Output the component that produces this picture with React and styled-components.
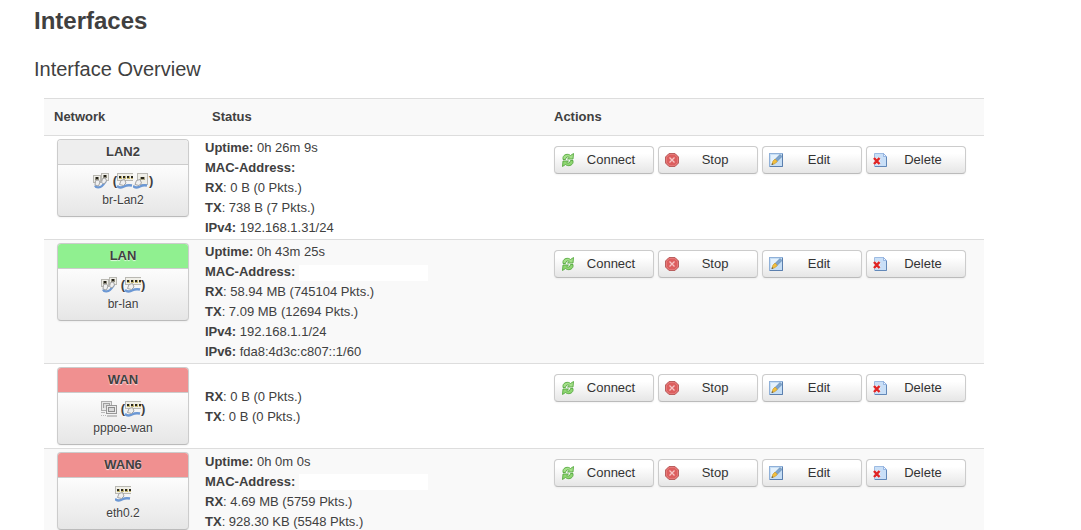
import React from 'react';

import styled, { createGlobalStyle } from 'styled-components';



/////

const GlobalStyle = createGlobalStyle`
    body{
        margin: 0;
        background-color: #fff;
        color: #404040;
        font-family: "Liberation Sans", Arial, sans-serif;
        font-size: 13px;
        line-height: 20px;
    }
`

const PageWrapper = styled.main`
    padding: 3px 34px 0px;
`

const PageTitle = styled.h2`
    margin: 0;
    font-size: 24px;
    line-height: 36px;
    font-weight: bold;
`

const SectionTitle = styled.h3`
    margin: 12px 0px 11px;
    font-size: 20px;
    line-height: 36px;
    font-weight: normal;
`

const TableWrapper = styled.div`
    max-width: 940px;
    margin-left: 10px;
`

const InterfaceTable = styled.table`
    width: 100%;
    border-collapse: separate;
    border-spacing: 0;
    table-layout: fixed;
    th{
        padding: 8px 10px;
        border-top: 1px solid #ddd;
        background-color: #f9f9f9;
        text-align: left;
        font-weight: bold;
    }
    .col-network{
        width: 158px;
        box-sizing: border-box;
    }
    .col-actions{
        width: 440px;
        box-sizing: border-box;
    }
    tbody tr:nth-child(even){
        background-color: #f9f9f9;
    }
`

const NetworkCell = styled.td`
    padding: 3px 13px;
    border-top: 1px solid #ddd;
    vertical-align: top;
`

const StatusCell = styled.td`
    padding: 2px 3px 1px;
    border-top: 1px solid #ddd;
    vertical-align: middle;
`

const ActionCell = styled.td`
    padding: 10px 10px 3px;
    border-top: 1px solid #ddd;
    vertical-align: top;
`

const StatusLine = styled.div`
    white-space: nowrap;
`

const HiddenValue = styled.span`
    display: inline-block;
    width: 129px;
    height: 16px;
    background-color: #fff;
    vertical-align: middle;
`

const IfaceBox = styled.div`
    border: 1px solid #ccc;
    border-bottom-color: #bbb;
    border-radius: 4px;
    overflow: hidden;
    text-align: center;
    background-image: linear-gradient(#fff, #fff 25%, #e6e6e6);
    box-shadow: 0 1px 2px rgba(0, 0, 0, 0.05);
    text-shadow: 0 1px 1px rgba(255, 255, 255, 0.75);
`

const IfaceHead = styled.div`
    height: 24px;
    line-height: 24px;
    border-bottom: 1px solid #ccc;
    background-color: ${props => props.$color};
    font-weight: bold;
`

const IfaceBody = styled.div`
    padding: 6px 0px 7px;
    font-size: 12px;
    line-height: 18px;
`

const IconLine = styled.div`
    display: flex;
    justify-content: center;
    align-items: center;
    height: 20px;
    font-size: 13px;
    font-weight: bold;
    .icon-group{
        display: flex;
        align-items: center;
        margin-left: 4px;
    }
`

const ButtonGroup = styled.div`
    display: flex;
    gap: 4px;
`

const ActionButton = styled.button`
    display: flex;
    align-items: center;
    width: 100px;
    height: 28px;
    padding: 0px 7px 0px 5px;
    border: 1px solid #ccc;
    border-bottom-color: #bbb;
    border-radius: 4px;
    background-image: linear-gradient(#fff, #fff 25%, #e6e6e6);
    box-shadow: 0 1px 2px rgba(0, 0, 0, 0.05);
    color: #333;
    font-family: inherit;
    font-size: 13px;
    line-height: 20px;
    cursor: pointer;
    span{
        flex: 1;
        text-align: center;
    }
    &:hover{
        background-image: linear-gradient(#e6e6e6, #e6e6e6);
    }
`



///////////// icons

const Svg = ({ children }) => (
    <svg width="16" height="16" viewBox="0 0 16 16" aria-hidden="true">{children}</svg>
);

const BridgeIcon = () => (
    <Svg>
        <path d="M2 12.500c1 2.500 5 2.500 7 .5s2.500-3 4-5" fill="none" stroke="#6c98d4" strokeWidth="2.200" />
        <rect x="0.500" y="2.500" width="7" height="7" fill="#efeee8" stroke="#b9b8b2" />
        <rect x="8.500" y="0.500" width="7" height="7" fill="#efeee8" stroke="#b9b8b2" />
        <path d="M2 4h4v3H2zM10 2h4v3h-4z" fill="#8b8878" />
        <path d="M3 4h2v2H3zM11 2h2v2h-2z" fill="#25231c" />
        <path d="M2.500 7.500l3-.5 1.500 2-1.500 4-3.500-1z" fill="#f0f0f0" stroke="#9b9b9b" strokeWidth="0.900" />
        <path d="M9.500 5.500l3-.5 1 3-2.500 3-2.500-1.500z" fill="#f0f0f0" stroke="#9b9b9b" strokeWidth="0.900" />
    </Svg>
);

const SwitchIcon = () => (
    <Svg>
        <rect x="0.500" y="0.500" width="16" height="7" fill="#f0efe8" stroke="#b9b8b2" />
        <path d="M2 3h3v3H2zM6 3h3v3H6zM10 3h3v3h-3zM14 3h2v3h-2z" fill="#c3b672" />
        <path d="M2 3h2v2H2zM6 3h2v2H6zM10 3h2v2h-2zM14 3h2v2h-2z" fill="#2a2820" />
        <path d="M0 13c3 2.500 5 1.800 7.500.3s4.500-1.300 7.500-.8" fill="none" stroke="#6c98d4" strokeWidth="2.400" />
        <path d="M4 7.500l3.500-1 1.500 3.500-2.500 2.500-4-1z" fill="#f0f0f0" stroke="#9b9b9b" strokeWidth="0.900" />
    </Svg>
);

const EthernetIcon = () => (
    <Svg>
        <rect x="4.500" y="0.500" width="10" height="11" fill="#efeee8" stroke="#b9b8b2" />
        <path d="M7 4h5v3H7z" fill="#aaa584" />
        <path d="M8 4h3v2H8z" fill="#2a2820" />
        <path d="M0 13c3 2.500 5 1.800 7.500.3s4-1.300 6.500-.8" fill="none" stroke="#6c98d4" strokeWidth="2.400" />
        <path d="M3.500 7.500l3.500-1 1.500 3.500-2.500 2.500-4-1z" fill="#f0f0f0" stroke="#9b9b9b" strokeWidth="0.900" />
    </Svg>
);

const TunnelIcon = () => (
    <Svg>
        <g shapeRendering="crispEdges">
            <path d="M0 0h11v10H0z" fill="#adadad" />
            <path d="M1 1h9v8H1z" fill="#e8e8e8" />
            <path d="M2 2h7v5H2z" fill="#a0a0a0" />
            <path d="M3 3h5v4H3z" fill="#dcdcdc" />
            <path d="M5 4h11v9H5z" fill="#989898" />
            <path d="M6 5h9v7H6z" fill="#ebebeb" />
            <path d="M7 6h7v5H7z" fill="#8c8c8c" />
            <path d="M8 7h5v3H8z" fill="#d8d8d8" />
            <path d="M6 14h10v2H6z" fill="#c4c4c4" />
            <path d="M0 14h1v1H0zM2 14h1v1H2zM4 14h1v1H4zM0 11h4v1H0z" fill="#b8b8b8" />
        </g>
    </Svg>
);

const ConnectIcon = () => (
    <Svg>
        <path d="M3 7.500V5.500C3.500 2.500 8 1.200 10.500 3.500L13.500 1.500 13 7H7.500l1.800-1.700C7.800 4.300 5.800 5 5.500 7.500z" fill="#a5e08a" stroke="#55a83e" strokeWidth="0.900" />
        <path d="M13 8.500v2c-.5 3-5 4.300-7.500 2L2.500 14.500 3 9h5.500l-1.800 1.700c1.500 1 3.500.3 3.800-2.200z" fill="#8fd672" stroke="#55a83e" strokeWidth="0.900" />
    </Svg>
);

const StopIcon = () => (
    <Svg>
        <path d="M5 1.500h6L14.500 5v6L11 14.500H5L1.500 11V5z" fill="#dc5f5f" stroke="#b9605f" />
        <path d="M5.400 2.500h5.200l2.900 2.900v5.200l-2.900 2.900H5.400l-2.900-2.900V5.400z" fill="none" stroke="#e98585" strokeWidth="0.700" />
        <path d="M5.500 5.500l5 5M10.500 5.500l-5 5" stroke="#f6c6c6" strokeWidth="1.300" />
    </Svg>
);

const EditIcon = () => (
    <Svg>
        <rect x="1.500" y="1.500" width="13" height="13" fill="#c6def5" stroke="#8fb0d8" />
        <path d="M2 14.500h12.500V2" fill="none" stroke="#5b7fae" />
        <path d="M3 3h9L3 12z" fill="#e4f1fc" />
        <path d="M6 8.500L12 2.500l2 2L8 10.500z" fill="#7ea4cc" stroke="#5980a8" strokeWidth="0.600" />
        <path d="M4 12.500L4.800 9.300 7 7 9.300 9.200 7.200 11.500z" fill="#f2bd3c" stroke="#c89a2a" strokeWidth="0.600" />
        <path d="M3.500 13l.6-2 1.400 1.400z" fill="#6b5a36" />
    </Svg>
);

const DeleteIcon = () => (
    <Svg>
        <path d="M2.500 1.500h9l3 3v10h-12z" fill="#c9dff7" stroke="#9dbbe2" />
        <path d="M3 14.500h11.500V5" fill="none" stroke="#6288b8" />
        <path d="M11.500 1.500v3h3z" fill="#f0f7ff" stroke="#7ba1d8" strokeWidth="0.700" />
        <path d="M2 6l5.500 6M7.500 6L2 12" stroke="#fff" strokeWidth="3.800" opacity="0.600" />
        <path d="M2 6l5.500 6M7.500 6L2 12" stroke="#e02525" strokeWidth="2.500" />
    </Svg>
);



/////////////

const deviceIcons = {
    bridge: BridgeIcon,
    switch: SwitchIcon,
    ethernet: EthernetIcon,
    tunnel: TunnelIcon,
};

const zoneColors = {
    none: '#eeeeee',
    lan: '#90f090',
    wan: '#f09090',
};

const interfaces = [
    {
        name: 'LAN2', zone: 'none', device: 'br-Lan2', type: 'bridge', ports: ['switch', 'ethernet'],
        status: [
            { label: 'Uptime:', value: '0h 26m 9s' },
            { label: 'MAC-Address:', hidden: true },
            { label: 'RX', value: '0 B (0 Pkts.)' },
            { label: 'TX', value: '738 B (7 Pkts.)' },
            { label: 'IPv4:', value: '192.168.1.31/24' },
        ],
    },
    {
        name: 'LAN', zone: 'lan', device: 'br-lan', type: 'bridge', ports: ['switch'],
        status: [
            { label: 'Uptime:', value: '0h 43m 25s' },
            { label: 'MAC-Address:', hidden: true },
            { label: 'RX', value: '58.94 MB (745104 Pkts.)' },
            { label: 'TX', value: '7.09 MB (12694 Pkts.)' },
            { label: 'IPv4:', value: '192.168.1.1/24' },
            { label: 'IPv6:', value: 'fda8:4d3c:c807::1/60' },
        ],
    },
    {
        name: 'WAN', zone: 'wan', device: 'pppoe-wan', type: 'tunnel', ports: ['switch'],
        status: [
            { label: 'RX', value: '0 B (0 Pkts.)' },
            { label: 'TX', value: '0 B (0 Pkts.)' },
        ],
    },
    {
        name: 'WAN6', zone: 'wan', device: 'eth0.2', type: 'switch', ports: [],
        status: [
            { label: 'Uptime:', value: '0h 0m 0s' },
            { label: 'MAC-Address:', hidden: true },
            { label: 'RX', value: '4.69 MB (5759 Pkts.)' },
            { label: 'TX', value: '928.30 KB (5548 Pkts.)' },
        ],
    },
];

const actions = [
    { label: 'Connect', Icon: ConnectIcon },
    { label: 'Stop', Icon: StopIcon },
    { label: 'Edit', Icon: EditIcon },
    { label: 'Delete', Icon: DeleteIcon },
];



const NetworkBox = ({ name, zone, device, type, ports }) => {

    const TypeIcon = deviceIcons[type];

    return (
        <IfaceBox>
            <IfaceHead $color={zoneColors[zone]}>{name}</IfaceHead>
            <IfaceBody>
                <IconLine>
                    <TypeIcon />
                    {ports.length > 0 &&
                        <span className="icon-group">
                            (
                            {ports.map((port) => {
                                const PortIcon = deviceIcons[port];
                                return <PortIcon key={port} />
                            })}
                            )
                        </span>
                    }
                </IconLine>
                <div>{device}</div>
            </IfaceBody>
        </IfaceBox>
    );
};



const App = () => {

    return (

        <PageWrapper>
            <GlobalStyle />

            <PageTitle>Interfaces</PageTitle>
            <SectionTitle>Interface Overview</SectionTitle>

            <TableWrapper>
                <InterfaceTable>
                    <thead>
                        <tr>
                            <th className="col-network">Network</th>
                            <th>Status</th>
                            <th className="col-actions">Actions</th>
                        </tr>
                    </thead>
                    <tbody>
                        {interfaces.map((item) => (
                            <tr key={item.name}>
                                <NetworkCell>
                                    <NetworkBox {...item} />
                                </NetworkCell>

                                <StatusCell>
                                    {item.status.map(({ label, value, hidden }) => (
                                        <StatusLine key={label}>
                                            <strong>{label}</strong>
                                            {label.endsWith(':') ? ' ' : ': '}
                                            {hidden ? <HiddenValue /> : value}
                                        </StatusLine>
                                    ))}
                                </StatusCell>

                                <ActionCell>
                                    <ButtonGroup>
                                        {actions.map(({ label, Icon }) => (
                                            <ActionButton type="button" key={label}>
                                                <Icon />
                                                <span>{label}</span>
                                            </ActionButton>
                                        ))}
                                    </ButtonGroup>
                                </ActionCell>
                            </tr>
                        ))}
                    </tbody>
                </InterfaceTable>
            </TableWrapper>
        </PageWrapper>
    );
};

export default App;
